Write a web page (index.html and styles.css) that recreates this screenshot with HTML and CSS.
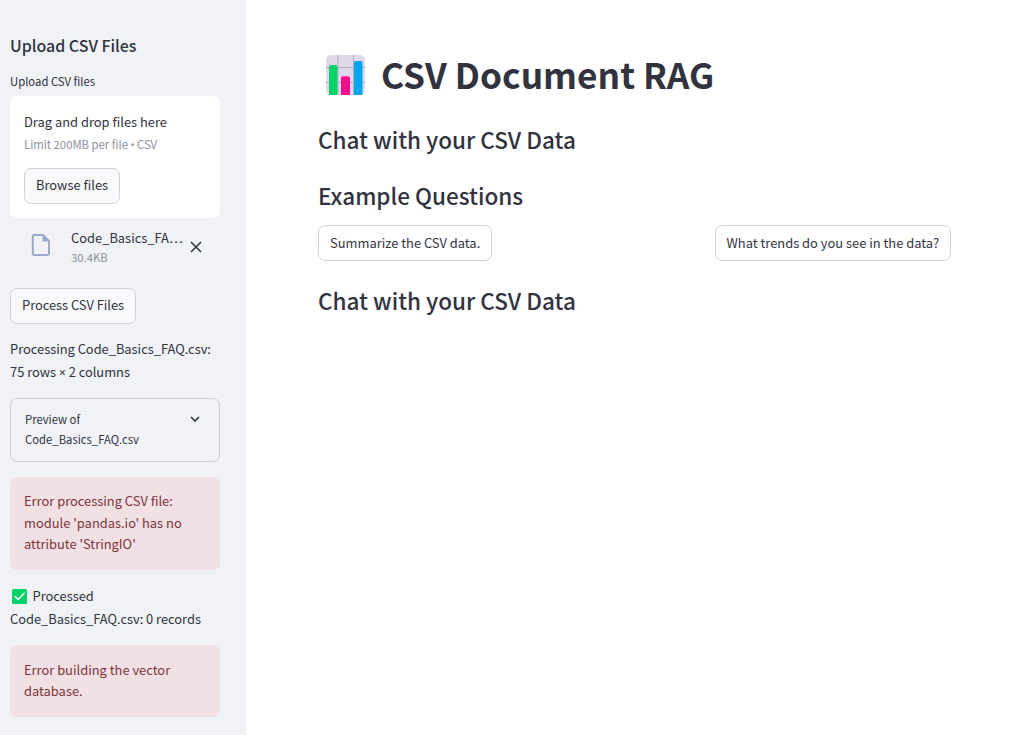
FILE: index.html
```html
<!DOCTYPE html>
<html lang="en">
<head>
<meta charset="utf-8">
<title>CSV Document RAG</title>
<link rel="stylesheet" href="styles.css">
</head>
<body>
<div class="app">
  <aside class="sidebar">
    <h2 class="side-title">Upload CSV Files</h2>
    <div class="label">Upload CSV files</div>
    <section class="dropzone">
      <div class="drop-text">Drag and drop files here</div>
      <div class="hint">Limit 200MB per file <span class="sym">•</span> CSV</div>
      <button class="btn">Browse files</button>
    </section>
    <div class="file">
      <svg class="file-icon" viewBox="0 0 20 24" width="20" height="24"><path d="M3.200 2H12l6 6v12.600c0 .8-.6 1.400-1.400 1.400H3.200c-.8 0-1.400-.6-1.400-1.400V3.400C1.800 2.600 2.400 2 3.200 2z" fill="none" stroke="#9ba9cb" stroke-width="2"/><path d="M11.500 1.500V8.500H18.500z" fill="#9ba9cb"/></svg>
      <div class="file-info">
        <div class="file-name">Code_Basics_FA…</div>
        <div class="hint">30.4KB</div>
      </div>
      <svg class="close" viewBox="0 0 12 12" width="12" height="12"><path d="M1 1l10 10M11 1L1 11" stroke="#31333f" stroke-width="1.500" fill="none"/></svg>
    </div>
    <button class="btn process">Process CSV Files</button>
    <p class="text">Processing Code_Basics_FAQ.csv:<br>75 rows <span class="sym times">×</span> 2 columns</p>
    <div class="expander">
      <span>Preview of<br>Code_Basics_FAQ.csv</span>
      <svg class="chevron" viewBox="0 0 10 6" width="10" height="6"><path d="M1 1l4 4 4-4" stroke="#31333f" stroke-width="1.600" fill="none"/></svg>
    </div>
    <div class="alert">Error processing CSV file:<br>module 'pandas.io' has no<br>attribute 'StringIO'</div>
    <p class="text done"><svg class="check" viewBox="0 0 15 15" width="15" height="15"><rect width="15" height="15" rx="1.500" fill="#00d26a"/><path d="M3.200 7.500l3 3 5.800-6.200" stroke="#fff" stroke-width="1.500" stroke-linecap="round" stroke-linejoin="round" fill="none"/></svg>Processed<br>Code_Basics_FAQ.csv: 0 records</p>
    <div class="alert last">Error building the vector<br>database.</div>
  </aside>
  <main class="main">
    <h1 class="title">
      <svg class="chart" viewBox="0 0 39 40" width="39" height="40"><rect width="39" height="40" rx="5" fill="#e1d8ec"/><path d="M12 0v40M27.500 0v40M0 12.500h39M0 27.500h39" stroke="#b4acbc" stroke-width="1"/><path d="M3 40V12q0-2 2-2h4.500q2 0 2 2v28z" fill="#00d26a"/><path d="M15 40V23.300q0-2 2-2h5q2 0 2 2V40z" fill="#f70a8d"/><path d="M28 40V8q0-2 2-2h4.500q2 0 2 2v32z" fill="#00a6ed"/></svg>
      <span>CSV Document RAG</span>
    </h1>
    <h2 class="heading">Chat with your CSV Data</h2>
    <h2 class="heading example">Example Questions</h2>
    <div class="questions">
      <button class="btn">Summarize the CSV data.</button>
      <button class="btn">What trends do you see in the data?</button>
    </div>
    <h2 class="heading">Chat with your CSV Data</h2>
  </main>
</div>
</body>
</html>
```
FILE: styles.css
```css
* { box-sizing: border-box; }
body { margin: 0; background: #fff; color: #31333f; font-family: "Noto Sans CJK SC", "Open Sans", sans-serif; font-size: 12.900px; line-height: 23px; }
h1, h2, p { margin: 0; }
.app { display: flex; height: 735px; overflow: hidden; }
.sidebar { width: 246px; flex: none; background: #f0f2f6; padding: 34px 26px 0 10px; }
.side-title { font-size: 16px; font-weight: 500; line-height: 23px; letter-spacing: -0.030px; }
.label { font-size: 11.300px; line-height: 20px; margin-top: 14px; }
.dropzone { margin-top: 5px; height: 122px; border-radius: 7px; background: #fff; padding: 14px 14px; }
.drop-text { line-height: 23px; }
.hint { font-size: 11.300px; line-height: 20px; color: #8d8f98; }
.dropzone .hint { margin-top: 1px; }
.sym { font-family: "Noto Sans", sans-serif; font-size: 10.500px; line-height: 1; }
.times { font-size: 12px; }
.btn { display: block; height: 36px; padding: 0 11px; border: 1px solid #d0d2d7; border-radius: 7px; background: #fff; color: inherit; font: inherit; white-space: nowrap; line-height: 32px; }
.sidebar .btn { background: #f9f9fb; padding-bottom: 2px; }
.dropzone .btn { margin-top: 14px; }
.file { display: flex; margin-top: 9px; padding-left: 21px; height: 42px; }
.file-icon { margin-top: 6px; }
.file-info { margin-left: 20px; width: 113px; white-space: nowrap; }
.file-name { line-height: 22px; }
.file-info .hint { line-height: 17px; }
.close { margin: 14px 0 0 6px; }
.process { margin-top: 19px; letter-spacing: -0.030px; }
.text { margin-top: 13px; white-space: nowrap; letter-spacing: -0.020px; }
.expander { margin-top: 15px; height: 64px; border: 1px solid #cccfd4; border-radius: 7px; padding: 10px 19px 0 14px; display: flex; justify-content: space-between; font-size: 11.300px; line-height: 20px; }
.chevron { margin-top: 7px; }
.alert { margin-top: 15px; height: 93px; border-radius: 7px; background: #f1e0e4; color: #7d353b; padding: 13px 14px; line-height: 21.600px; white-space: nowrap; }
.done { margin-top: 14px; }
.last { height: 72px; margin-top: 15px; padding-top: 14px; line-height: 21.200px; }
.check { vertical-align: -2.500px; margin: 0 5.500px 0 2px; }
.main { padding: 50px 58px 0 72px; flex: 1; }
.title { display: flex; font-size: 35.250px; font-weight: 700; line-height: 47px; height: 50px; white-space: nowrap; }
.chart { margin: 5px 16px 0 8px; }
.heading { margin-top: 25px; font-size: 22.500px; font-weight: 500; line-height: 28px; height: 30px; white-space: nowrap; }
.example { margin-top: 26px; }
.questions { display: flex; justify-content: space-between; margin-top: 14px; }
```
